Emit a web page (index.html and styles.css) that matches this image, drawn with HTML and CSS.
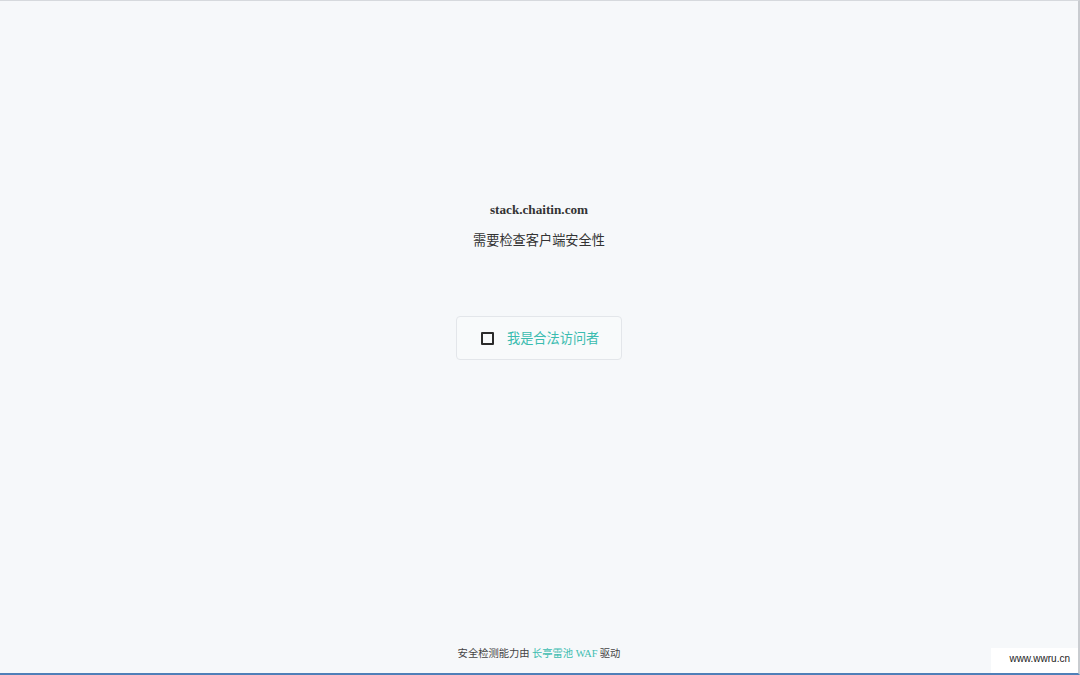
FILE: index.html
```html
<!DOCTYPE html>
<html lang="zh-CN">
<head>
<meta charset="utf-8">
<title>stack.chaitin.com</title>
<link rel="stylesheet" href="styles.css">
</head>
<body>
<div class="page">
  <main class="main">
    <div class="host">stack.chaitin.com</div>
    <div class="desc">需要检查客户端安全性</div>
    <div class="verify">
      <span class="box"></span>
      <span class="label">我是合法访问者</span>
    </div>
  </main>
  <footer class="footer">安全检测能力由 <a class="link" href="#">长亭雷池 WAF</a> 驱动</footer>
  <div class="mark">www.wwru.cn</div>
</div>
</body>
</html>
```
FILE: styles.css
```css
html, body {
  margin: 0;
  padding: 0;
  height: 100%;
}
body {
  background: #f6f8fa;
  font-family: "Noto Sans CJK SC", "Noto Sans", sans-serif;
  color: #333;
  overflow: hidden;
}
.page {
  position: relative;
  height: 675px;
  box-sizing: border-box;
  border-top: 1px solid #d6d9dd;
  border-right: 2px solid #c9ccd0;
  border-bottom: 2px solid #4f7fb8;
  display: flex;
  flex-direction: column;
  align-items: center;
}
.main {
  display: flex;
  flex-direction: column;
  align-items: center;
  padding-top: 200px;
  flex: 1;
}
.host {
  font-family: "Liberation Serif", serif;
  font-weight: bold;
  font-size: 13.2px;
  line-height: 17px;
  color: #333;
}
.desc {
  margin-top: 12px;
  font-size: 13.2px;
  line-height: 20px;
  color: #333;
}
.verify {
  margin-top: 66px;
  width: 166px;
  height: 44px;
  box-sizing: border-box;
  border: 1px solid #e3e6ea;
  border-radius: 4px;
  background: #f8fafb;
  display: flex;
  align-items: center;
  padding-left: 24px;
  gap: 13px;
}
.box {
  width: 13px;
  height: 13px;
  box-sizing: border-box;
  border: 2px solid #2b2b2b;
  border-radius: 1px;
}
.label {
  font-size: 13.2px;
  color: #3bbcb0;
  line-height: 20px;
}
.footer {
  font-size: 10.3px;
  color: #444;
  line-height: 16px;
  margin-bottom: 11px;
}
.link {
  color: #3bbcb0;
  text-decoration: none;
  font-family: "Liberation Serif", "Noto Sans CJK SC", serif;
}
.mark {
  position: absolute;
  right: 0;
  bottom: 0;
  background: #ffffff;
  font-family: "Liberation Sans", sans-serif;
  font-size: 10px;
  color: #222;
  padding: 5px 8px 9px 18px;
}
```
